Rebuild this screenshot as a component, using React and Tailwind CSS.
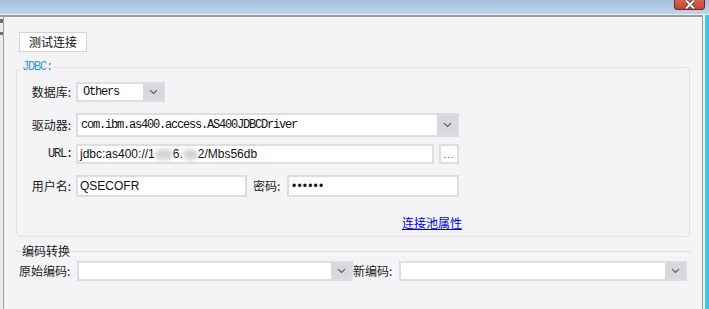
import React from 'react';

const cjk = { fontFamily: '"Noto Sans CJK SC", "Liberation Sans", sans-serif' };
const mono = { fontFamily: '"Liberation Mono", "Noto Sans CJK SC", monospace' };
const sans = { fontFamily: '"Liberation Sans", Arial, sans-serif' };

const Chevron = () => (
  <svg width="9" height="6" viewBox="0 0 9 6" className="block">
    <path d="M1 1.2 L4.5 4.5 L8 1.2" fill="none" stroke="#5a5a5a" strokeWidth="1.1" />
  </svg>
);

const Combo = ({ width, height = 20, children, textClass = '' }) => (
  <div
    className="flex bg-white border-2 border-[#dedee0] box-border"
    style={{ width, height }}
  >
    <div className={`flex-1 flex items-center overflow-hidden whitespace-nowrap ${textClass}`}>{children}</div>
    <div className="w-[20px] bg-[#d8d9dc] flex items-center justify-center">
      <Chevron />
    </div>
  </div>
);

const Label = ({ children, w = 54 }) => (
  <div className="text-[12px] text-[#1a1a1a] text-right shrink-0 leading-[14px]" style={{ ...cjk, width: w }}>
    {children}
  </div>
);

const Blur = ({ w }) => (
  <span className="inline-block h-[11px] bg-[#d4d4d6] blur-[2px] align-middle rounded-full" style={{ width: w }} />
);

export default function App() {
  return (
    <div className="w-[709px] h-[309px] bg-[#f4f4f6] overflow-hidden flex flex-col" style={cjk}>
      {/* title bar */}
      <div className="h-[14px] bg-gradient-to-b from-[#a5c0de] to-[#bed5ee] flex justify-end pr-[4px]">
        <div className="w-[31px] h-[11px] -mt-[1px] border border-[#7a2316] rounded-b-[3px] bg-gradient-to-b from-[#d06550] to-[#c4452f] flex items-center justify-center">
          <svg width="12" height="9" viewBox="0 0 12 9">
            <path d="M2 0.5 L10 8.5 M10 0.5 L2 8.5" stroke="#5b3030" strokeWidth="3.4" />
            <path d="M2 0.5 L10 8.5 M10 0.5 L2 8.5" stroke="#ffffff" strokeWidth="2" />
          </svg>
        </div>
      </div>
      <div className="h-px bg-[#e9eff7]" />

      <div className="flex flex-1">
        <div className="w-[703px] flex flex-col border-t-2 border-[#a09f91]">
          <div className="flex flex-1">
            <div className="w-[3px] bg-[#ededed] flex flex-col">
              <div className="h-[4px] mt-[2px] bg-[#707070]" />
              <div className="h-[3px] mt-[9px] bg-[#707070]" />
            </div>
            <div className="w-px bg-[#a09f91]" />

            {/* content */}
            <div className="flex-1 flex flex-col pt-[15px]">
              <div className="ml-[15px] w-[68px] h-[20px] bg-white border border-[#d4d4d4] flex items-center justify-center text-[12px] text-[#111]">
                测试连接
              </div>

              <fieldset className="mt-[9px] ml-[12px] mr-[12px] border border-[#e1e1e4] rounded-[5px]">
                <legend className="ml-[3px] px-[2px] h-[12px] leading-[12px] text-[12px] tracking-[-1.2px] text-[#3399dd]" style={mono}>
                  JDBC:
                </legend>

                <div className="mt-[9px] flex items-center h-[20px]">
                  <Label>数据库:</Label>
                  <div className="ml-[5px]">
                    <Combo width={89} textClass="pl-[5px] text-[12px] tracking-[-1.2px] text-[#111]">
                      <span style={mono}>Others</span>
                    </Combo>
                  </div>
                </div>

                <div className="mt-[11px] flex items-center h-[24px]">
                  <Label>驱动器:</Label>
                  <div className="ml-[5px]">
                    <Combo width={383} height={24} textClass="pl-[3px] text-[12px] tracking-[-1.2px] text-[#111]">
                      <span style={mono}>com.ibm.as400.access.AS400JDBCDriver</span>
                    </Combo>
                  </div>
                </div>

                <div className="mt-[7px] flex items-center h-[20px]">
                  <div className="w-[55px] text-right text-[12px] tracking-[-1.2px] text-[#1a1a1a]" style={mono}>URL:</div>
                  <div
                    className="ml-[4px] w-[358px] h-[20px] bg-white border-2 border-[#dedee0] flex items-center pl-[2px] text-[12px] text-[#111] whitespace-nowrap"
                    style={sans}
                  >
                    jdbc:as400://1<Blur w={18} />6.<Blur w={15} />2/Mbs56db
                  </div>
                  <div className="ml-[5px] w-[20px] h-[20px] bg-white border-2 border-[#dedee0] flex items-end justify-center pb-[2px] text-[9px] leading-[9px] text-[#333] tracking-[1px]" style={sans}>
                    ...
                  </div>
                </div>

                <div className="mt-[11px] flex items-center h-[22px]">
                  <Label>用户名:</Label>
                  <div
                    className="ml-[5px] w-[171px] h-[22px] bg-white border-2 border-[#dedee0] flex items-center pl-[2px] text-[12px] text-[#111]"
                    style={sans}
                  >
                    QSECOFR
                  </div>
                  <div className="ml-[6px] w-[34px] text-[12px] text-[#1a1a1a]">密码:</div>
                  <div
                    className="w-[172px] h-[22px] bg-white border-2 border-[#dedee0] flex items-center pl-[3px] text-[12px] text-[#111] tracking-[1.2px]"
                    style={sans}
                  >
                    ••••••
                  </div>
                </div>

                <div className="mt-[12px] h-[14px] pl-[385px] pb-[13px] box-content">
                  <span className="text-[12px] leading-[14px] text-[#0000ee] underline whitespace-nowrap">连接池属性</span>
                </div>
              </fieldset>

              {/* encoding group */}
              <div className="mt-[8px] ml-[12px] mr-[12px] h-[12px] flex items-center">
                <div className="w-[5px] h-px bg-[#dcdce0]" />
                <div className="px-[1px] text-[12px] leading-[12px] text-[#1a1a1a]">编码转换</div>
                <div className="flex-1 h-px bg-[#dcdce0]" />
              </div>

              <div className="mt-[4px] ml-[15px] flex items-center h-[20px]">
                <div className="w-[58px] text-[12px] text-[#1a1a1a] whitespace-nowrap">原始编码:</div>
                <Combo width={276} />
                <div className="w-[46px] text-[12px] text-[#1a1a1a] whitespace-nowrap">新编码:</div>
                <Combo width={288} />
              </div>
            </div>

            <div className="w-px bg-[#a09f91]" />
          </div>
        </div>
        <div className="w-[2px] bg-[#eef0f2]" />
        <div className="w-[4px] bg-[#41c7ef]" />
      </div>
    </div>
  );
}
